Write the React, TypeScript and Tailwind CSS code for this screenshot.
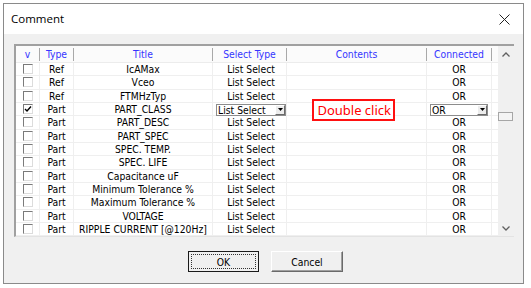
const rows: [string, string][] = [
  ["Ref", "IcAMax"],
  ["Ref", "Vceo"],
  ["Ref", "FTMHzTyp"],
  ["Part", "PART_CLASS"],
  ["Part", "PART_DESC"],
  ["Part", "PART_SPEC"],
  ["Part", "SPEC. TEMP."],
  ["Part", "SPEC. LIFE"],
  ["Part", "Capacitance uF"],
  ["Part", "Minimum Tolerance %"],
  ["Part", "Maximum Tolerance %"],
  ["Part", "VOLTAGE"],
  ["Part", "RIPPLE CURRENT [@120Hz]"],
];

const font = { fontFamily: '"DejaVu Sans Condensed", "Liberation Sans", sans-serif' };

const CheckBox = ({ checked }: { checked?: boolean }) => (
  <div className="w-[10px] h-[10px] bg-white border-t border-l border-[#7a7a7a] border-r border-b border-r-[#dcdcdc] border-b-[#dcdcdc] flex items-center justify-center">
    {checked && (
      <svg width="8" height="8" viewBox="0 0 8 8">
        <path d="M1 4 L3 6 L7 1.5" fill="none" stroke="#000" strokeWidth="1.4" />
      </svg>
    )}
  </div>
);

const DropBtn = () => (
  <div className="w-[10px] h-[10px] bg-[#ececec] border-t border-l border-white border-r border-b border-r-[#6a6a6a] border-b-[#6a6a6a] flex items-end justify-center pb-[2px]">
    <svg width="5" height="4" viewBox="0 0 5 4">
      <path d="M0 0 L5 0 L2.5 3 Z" fill="#000" />
    </svg>
  </div>
);

const Combo = ({ text }: { text: string }) => (
  <div className="flex-1 h-[12px] mt-[1px] bg-white border border-[#8c8c8c] flex items-center justify-between pl-[1px]">
    <span className="leading-none">{text}</span>
    <DropBtn />
  </div>
);

const Chevron = ({ up }: { up?: boolean }) => (
  <svg width="8" height="5" viewBox="0 0 8 5">
    <path
      d={up ? "M0.5 4.5 L4 1 L7.5 4.5" : "M0.5 0.5 L4 4 L7.5 0.5"}
      fill="none"
      stroke="#606060"
      strokeWidth="1.3"
    />
  </svg>
);

export default function App() {
  return (
    <div className="w-[531px] h-[288px] bg-white pl-[3px] pt-[3px]" style={font}>
      <div className="w-[521px] h-[281px] border border-[#8a8a8a] bg-[#f0f0f0] flex flex-col">
        <div className="h-[30px] bg-white flex items-center justify-between pl-[7px] pr-[13px]">
          <span
            className="text-[11.5px] text-black"
            style={{ fontFamily: '"Open Sans", "Noto Sans", sans-serif' }}
          >
            Comment
          </span>
          <svg width="11" height="11" viewBox="0 0 11 11">
            <path d="M0.5 0.5 L10.5 10.5 M10.5 0.5 L0.5 10.5" stroke="#222" strokeWidth="1" />
          </svg>
        </div>

        <div className="pl-[10px] pt-[10px]">
          <div className="relative w-[500px] flex border-t-2 border-l-2 border-[#a0a0a0] border-b border-b-[#e3e3e3] bg-white text-[10.3px] text-black">
            <div className="w-[482px] flex flex-col">
              <div className="h-[17px] flex items-center bg-[#fbfbfb] text-[#3535ff] text-[10.3px] border-b border-[#ececec]">
                <div className="w-[24px] text-center border-r border-[#a9a9a9] h-[13px] leading-[13px]">v</div>
                <div className="w-[34px] text-center border-r border-[#a9a9a9] h-[13px] leading-[13px]">Type</div>
                <div className="w-[139px] text-center border-r border-[#a9a9a9] h-[13px] leading-[13px]">Title</div>
                <div className="w-[74px] text-center border-r border-[#a9a9a9] h-[13px] leading-[13px]">Select Type</div>
                <div className="w-[140px] text-center border-r border-[#a9a9a9] h-[13px] leading-[13px]">Contents</div>
                <div className="w-[65px] text-center border-r border-[#a9a9a9] h-[13px] leading-[13px]">Connected</div>
                <div className="w-[6px]" />
              </div>
              {rows.map(([type, title], i) => {
                const active = i === 3;
                return (
                  <div key={title} className="h-[13.33px] flex border-b border-[#efefef] leading-[12px]">
                    <div className="w-[24px] flex items-center pl-[7px] border-r border-[#efefef]">
                      <CheckBox checked={active} />
                    </div>
                    <div className="w-[34px] text-center border-r border-[#efefef]">{type}</div>
                    <div className="w-[139px] text-center border-r border-[#efefef] whitespace-nowrap">{title}</div>
                    <div className="w-[74px] flex border-r border-[#efefef] pl-[3px]">
                      {active ? <Combo text="List Select" /> : <span className="flex-1 text-center">List Select</span>}
                    </div>
                    <div className="w-[140px] border-r border-[#efefef]" />
                    <div className="w-[65px] flex border-r border-[#efefef] px-[3px]">
                      {active ? <Combo text="OR" /> : <span className="flex-1 text-center">OR</span>}
                    </div>
                    <div className="w-[6px]" />
                  </div>
                );
              })}
            </div>
            <div className="w-[16px] bg-[#f0f0f0] flex flex-col">
              <div className="h-[17px] flex items-center justify-center">
                <Chevron up />
              </div>
              <div className="flex-1 pt-[49px]">
                <div className="w-[15px] h-[9px] border border-[#a6a6a6] bg-[#f4f4f4]" />
              </div>
              <div className="h-[16px] flex items-center justify-center">
                <Chevron />
              </div>
            </div>
            <div className="absolute left-[296px] top-[53px] w-[83px] h-[22px] border-2 border-[#ff1010] bg-white flex items-center justify-end pr-[2px]">
              <span className="text-[13px] text-[#ff0000] leading-none" style={{ fontFamily: '"Noto Sans", "Liberation Sans", sans-serif' }}>
                Double click
              </span>
            </div>
          </div>
        </div>

        <div className="flex pl-[184px] mt-[14px] gap-[12px] text-[10.3px] text-black">
          <div className="w-[71px] h-[21px] border border-[#1a1a1a] bg-[#f0f0f0] p-[2px]">
            <div className="w-full h-full border border-dotted border-[#333] flex items-center justify-center leading-none">
              OK
            </div>
          </div>
          <div className="w-[72px] h-[21px] bg-[#f0f0f0] border-t border-l border-white border-r border-b border-r-[#6a6a6a] border-b-[#6a6a6a] shadow-[inset_-1px_-1px_0_#a0a0a0] flex items-center justify-center leading-none">
            Cancel
          </div>
        </div>
      </div>
    </div>
  );
}
